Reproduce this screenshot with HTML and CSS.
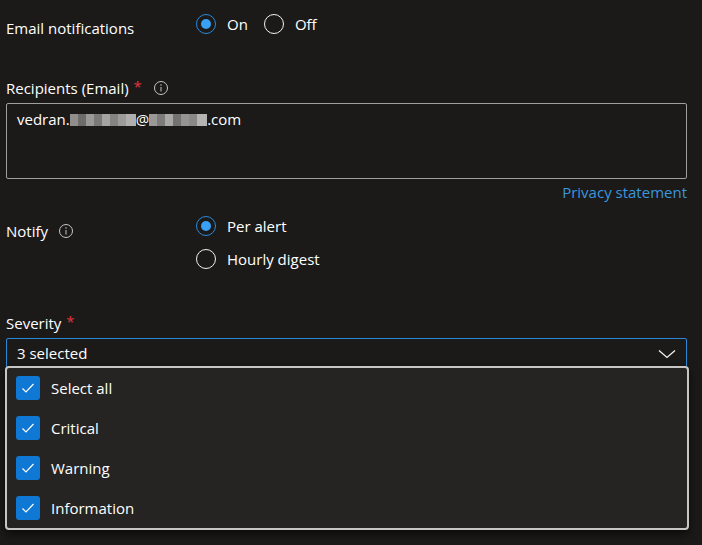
FILE: index.html
```html
<!DOCTYPE html>
<html lang="en">
<head>
<meta charset="utf-8">
<title>Email notifications</title>
<link rel="stylesheet" href="styles.css">
</head>
<body>
<div class="page">
  <div class="row row-email">
    <div class="field-label">Email notifications</div>
    <div class="radio-group horizontal">
      <label class="radio checked"><span class="circle"></span><span class="rtext">On</span></label>
      <label class="radio"><span class="circle"></span><span class="rtext">Off</span></label>
    </div>
  </div>

  <div class="label-line recipients-label">
    <span>Recipients (Email)</span><span class="req">*</span>
    <svg class="info" width="16" height="16" viewBox="0 0 16 16"><circle cx="8" cy="8" r="6.5" fill="none" stroke="#c8c6c4" stroke-width="1"/><line x1="8" y1="7" x2="8" y2="11.5" stroke="#c8c6c4" stroke-width="1"/><circle cx="8" cy="5" r="0.75" fill="#c8c6c4"/></svg>
  </div>
  <div class="textarea">
    <span>vedran.</span><span class="blur blur1"></span><span>@</span><span class="blur blur2"></span><span>.com</span>
  </div>
  <div class="privacy"><a href="#">Privacy statement</a></div>

  <div class="row row-notify">
    <div class="field-label notify-label">Notify
      <svg class="info" width="16" height="16" viewBox="0 0 16 16"><circle cx="8" cy="8" r="6.5" fill="none" stroke="#c8c6c4" stroke-width="1"/><line x1="8" y1="7" x2="8" y2="11.5" stroke="#c8c6c4" stroke-width="1"/><circle cx="8" cy="5" r="0.75" fill="#c8c6c4"/></svg>
    </div>
    <div class="radio-group vertical">
      <label class="radio checked"><span class="circle"></span><span class="rtext">Per alert</span></label>
      <label class="radio"><span class="circle"></span><span class="rtext">Hourly digest</span></label>
    </div>
  </div>

  <div class="label-line severity-label"><span>Severity</span><span class="req">*</span></div>
  <div class="dropdown-wrap">
    <div class="dropdown">
      <span>3 selected</span>
      <svg class="chev" width="18" height="10" viewBox="0 0 18 10"><polyline points="1,1.5 9,8.5 17,1.5" fill="none" stroke="#f3f2f1" stroke-width="1.3"/></svg>
    </div>
    <div class="menu">
      <div class="item"><span class="cb"><svg width="24" height="24" viewBox="0 0 24 24"><polyline points="6.5,12.5 10,16 17.5,8" fill="none" stroke="#fff" stroke-width="1.2"/></svg></span><span>Select all</span></div>
      <div class="item"><span class="cb"><svg width="24" height="24" viewBox="0 0 24 24"><polyline points="6.5,12.5 10,16 17.5,8" fill="none" stroke="#fff" stroke-width="1.2"/></svg></span><span>Critical</span></div>
      <div class="item"><span class="cb"><svg width="24" height="24" viewBox="0 0 24 24"><polyline points="6.5,12.5 10,16 17.5,8" fill="none" stroke="#fff" stroke-width="1.2"/></svg></span><span>Warning</span></div>
      <div class="item"><span class="cb"><svg width="24" height="24" viewBox="0 0 24 24"><polyline points="6.5,12.5 10,16 17.5,8" fill="none" stroke="#fff" stroke-width="1.2"/></svg></span><span>Information</span></div>
    </div>
  </div>
</div>
</body>
</html>
```
FILE: styles.css
```css
html, body {
  margin: 0;
  padding: 0;
  background: #1b1a19;
  color: #ffffff;
  font-family: "Open Sans", "Noto Sans", sans-serif;
  font-size: 15px;
}
.page {
  padding: 0 15px 0 6px;
  height: 545px;
  box-sizing: border-box;
  overflow: hidden;
}
.row {
  display: flex;
  align-items: flex-start;
}
.row-email {
  margin-top: 14px;
}
.field-label {
  width: 190px;
  flex: none;
  line-height: 20px;
  padding-top: 4px;
}
.radio-group {
  display: flex;
}
.radio-group.horizontal {
  gap: 16px;
}
.radio-group.vertical {
  flex-direction: column;
  gap: 13px;
}
.radio {
  display: flex;
  align-items: center;
  height: 20px;
  line-height: 20px;
}
.circle {
  width: 20px;
  height: 20px;
  box-sizing: border-box;
  border-radius: 50%;
  border: 1px solid #f3f2f1;
  position: relative;
  flex: none;
}
.radio.checked .circle {
  border-color: #2b88d8;
}
.radio.checked .circle::after {
  content: "";
  position: absolute;
  left: 4px;
  top: 4px;
  width: 10px;
  height: 10px;
  border-radius: 50%;
  background: #3aa0f3;
}
.rtext {
  margin-left: 11px;
}
.label-line {
  display: flex;
  align-items: center;
  line-height: 20px;
  height: 20px;
}
.recipients-label {
  margin-top: 40px;
}
.req {
  color: #e0343c;
  margin-left: 5px;
  position: relative;
  top: -2px;
}
.info {
  margin-left: 11px;
}
.notify-label {
  display: flex;
  align-items: center;
  padding-top: 5px;
}
.notify-label .info {
  margin-left: 10px;
}
.textarea {
  margin-top: 5px;
  height: 76px;
  box-sizing: border-box;
  border: 1px solid #a19f9d;
  border-radius: 2px;
  padding: 4px 10px;
  line-height: 22px;
  display: flex;
  align-items: flex-start;
}
.blur {
  display: inline-block;
  height: 12px;
  margin-top: 6px;
}
.blur1 {
  width: 66px;
  background:
    linear-gradient(90deg, #8f8e8d 0 8px, #6d6c6b 8px 16px, #9a9998 16px 24px, #7a7978 24px 32px, #a5a4a3 32px 40px, #858483 40px 48px, #9c9b9a 48px 56px, #b0afae 56px 66px);
}
.blur2 {
  width: 58px;
  background:
    linear-gradient(90deg, #9a9998 0 8px, #7d7c7b 8px 16px, #a9a8a7 16px 24px, #737271 24px 32px, #959493 32px 40px, #8a8988 40px 48px, #b5b4b3 48px 58px);
}
.privacy {
  margin-top: 3px;
  text-align: right;
  line-height: 20px;
}
.privacy a {
  color: #3a96dd;
  text-decoration: none;
}
.row-notify {
  margin-top: 14px;
}
.severity-label {
  margin-top: 44px;
}
.dropdown-wrap {
  position: relative;
  margin-top: 5px;
}
.dropdown {
  height: 30px;
  box-sizing: border-box;
  border: 1px solid #2b88d8;
  border-radius: 2px;
  padding: 0 10px;
  display: flex;
  align-items: center;
  justify-content: space-between;
}
.chev {
  margin-top: 2px;
}
.menu {
  position: absolute;
  left: -1px;
  right: -2px;
  top: 28px;
  background: #252423;
  border: 2px solid #c8c6c4;
  border-radius: 4px;
  box-shadow: 0 4px 10px rgba(0,0,0,0.6);
  padding-left: 9px;
}
.item {
  height: 40px;
  display: flex;
  align-items: center;
}
.cb {
  width: 24px;
  height: 24px;
  border-radius: 3px;
  background: #0f78d4;
  margin-right: 11px;
  display: flex;
  flex: none;
}
```
